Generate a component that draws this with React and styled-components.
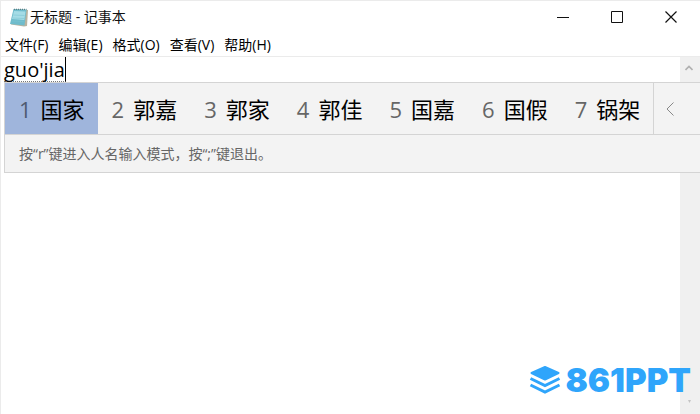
import { useState } from "react";
import styled, { createGlobalStyle } from "styled-components";

const GlobalStyle = createGlobalStyle`
    *{
        box-sizing: border-box;
    }
    body{
        margin: 0;
        background: #fff;
        color: #000;
        font-family: "Open Sans", "Noto Sans CJK SC", sans-serif;
    }
    button{
        font-family: inherit;
        background: none;
        border: 0;
        padding: 0;
        color: inherit;
    }
`;
const Window = styled.div`
    position: relative;
    display: flex;
    flex-direction: column;
    height: 100vh;
    overflow: hidden;
    border-top: 1px solid #ebebeb;
    border-left: 1px solid #ebebeb;
`;
const TitleBar = styled.header`
    display: flex;
    align-items: center;
    height: 32px;
    padding-left: 8px;
    h1{
        flex: 1;
        margin: 0;
        font-size: 14px;
        line-height: 20px;
        font-weight: normal;
        color: #111;
    }
`;
const WindowButton = styled.button`
    display: flex;
    align-items: center;
    justify-content: center;
    width: 54px;
    height: 32px;
`;
const WindowButtons = styled.div`
    display: flex;
    padding-right: 2px;
`;
const MenuBar = styled.nav`
    display: flex;
    gap: 10px;
    height: 23px;
    padding-left: 4px;
`;
const MenuButton = styled.button`
    font-size: 14px;
    line-height: 20px;
    white-space: nowrap;
`;
const Editor = styled.main`
    position: relative;
    flex: 1;
    display: flex;
    border-top: 1px solid #ebebeb;
`;
const TextBox = styled.textarea`
    flex: 1;
    border: 0;
    outline: 0;
    resize: none;
    padding: 0 3px;
    font: 20px/25px "Open Sans", "Noto Sans CJK SC", sans-serif;
`;
const ScrollBar = styled.div`
    display: flex;
    flex-direction: column;
    justify-content: space-between;
    width: 20px;
    background: #f0f0f0;
`;
const ScrollButton = styled.button`
    display: flex;
    align-items: center;
    justify-content: center;
    width: 18px;
    height: 22px;
`;
const Composition = styled.span`
    position: absolute;
    top: 0;
    left: 3px;
    height: 25px;
    font-size: 20px;
    line-height: 25px;
    border-bottom: 1px dotted #777;
    border-right: 1px solid #000;
`;
const ImePanel = styled.section`
    position: absolute;
    top: 25px;
    left: 3px;
    right: 0;
    background: #f3f3f3;
    border: 1px solid #d4d4d4;
    border-right: 0;
`;
const CandidateRow = styled.div`
    display: flex;
    height: 52px;
    border-bottom: 1px solid #d4d4d4;
`;
const Candidate = styled.button`
    display: flex;
    align-items: center;
    gap: 9px;
    padding: 0 13px 0 14px;
    font-size: 22px;
    line-height: 30px;
    white-space: nowrap;
    background: ${props => (props.$active ? '#9fb5dc' : 'transparent')};
    span{
        color: ${props => (props.$active ? '#4f5b70' : '#666')};
    }
`;
const PageButton = styled.button`
    flex: 1;
    display: flex;
    align-items: center;
    padding-left: 12px;
    border-left: 1px solid #d4d4d4;
`;
const Hint = styled.p`
    margin: 0;
    padding: 9px 14px 8px;
    font-size: 14px;
    line-height: 20px;
    color: #666;
`;
const Watermark = styled.div`
    position: absolute;
    right: 9px;
    bottom: 18px;
    display: flex;
    align-items: center;
    gap: 4px;
    color: #2fa5fb;
    font: 900 33px/32px Inter, sans-serif;
`;

const menus = ['文件(F)', '编辑(E)', '格式(O)', '查看(V)', '帮助(H)'];
const candidates = ['国家', '郭嘉', '郭家', '郭佳', '国嘉', '国假', '锅架'];

function NotepadIcon() {
    return (
        <svg width="21" height="20" viewBox="0 0 21 20" aria-hidden="true">
            <path d="M5 2 L19 3 L18 19 L15 19.5 L2 17.5 Z" fill="#b9b3a0" />
            <path d="M4.5 2 L17.5 2.5 L15.5 18.5 L1 17 Z" fill="#6fbccc" />
            <path d="M5 4 L16.5 4.5 L15.3 13 L3 12 Z" fill="#a5dce6" />
            <path d="M4 8 L15.5 8.5 M3.5 11 L15 11.5 M3 14 L14.5 14.5" stroke="#7cc4d2" strokeWidth=".6" />
            <path d="M5 2.4 H17.5" stroke="#5b7d83" strokeWidth="1.2" strokeDasharray="1 1" />
        </svg>
    );
}

function LogoIcon() {
    return (
        <svg width="32" height="30" viewBox="0 0 32 30" fill="none" aria-hidden="true">
            <path d="M16 2 L29.5 8 L16 14.5 L2.5 8 Z" fill="currentColor" stroke="currentColor" strokeWidth="2" strokeLinejoin="round" />
            <path d="M1.5 13.5 L16 20.5 L30.5 13.5 M1.5 20 L16 27 L30.5 20" stroke="currentColor" strokeWidth="3" />
        </svg>
    );
}

export default function App() {
    const [text, setText] = useState('');
    const [active, setActive] = useState(0);
    return (
        <Window>
            <GlobalStyle />
            <TitleBar>
                <NotepadIcon />
                <h1>无标题 - 记事本</h1>
                <WindowButtons>
                    <WindowButton aria-label="最小化">
                        <svg width="12" height="12" stroke="#111"><path d="M0 6.5 H12" /></svg>
                    </WindowButton>
                    <WindowButton aria-label="最大化">
                        <svg width="12" height="12" fill="none" stroke="#111"><path d="M.5 .5 H11.5 V11.5 H.5 Z" /></svg>
                    </WindowButton>
                    <WindowButton aria-label="关闭">
                        <svg width="12" height="12" stroke="#111" strokeWidth="1.2"><path d="M.5 .5 L11.5 11.5 M11.5 .5 L.5 11.5" /></svg>
                    </WindowButton>
                </WindowButtons>
            </TitleBar>
            <MenuBar>
                {menus.map(menu => (
                    <MenuButton key={menu}>{menu}</MenuButton>
                ))}
            </MenuBar>
            <Editor>
                <TextBox aria-label="文本" value={text} onChange={ev => setText(ev.target.value)} />
                <ScrollBar>
                    <ScrollButton aria-label="向上滚动">
                        <svg width="8" height="6" fill="none" stroke="#b0b0b0" strokeWidth="1.6"><path d="M.5 5 L4 1.5 L7.5 5" /></svg>
                    </ScrollButton>
                    <ScrollButton aria-label="向下滚动">
                        <svg width="8" height="6" fill="#c4c4c4"><path d="M3 0 H6 L4.5 3 Z" /></svg>
                    </ScrollButton>
                </ScrollBar>
                <Composition>guo'jia</Composition>
                <ImePanel>
                    <CandidateRow>
                        {candidates.map((word, index) => (
                            <Candidate key={word} $active={index === active} onClick={() => setActive(index)}>
                                <span>{index + 1}</span>
                                {word}
                            </Candidate>
                        ))}
                        <PageButton aria-label="上一页">
                            <svg width="8" height="14" fill="none" stroke="#888"><path d="M7.5 .5 L1 7 L7.5 13.5" /></svg>
                        </PageButton>
                    </CandidateRow>
                    <Hint>按“r”键进入人名输入模式，按“;”键退出。</Hint>
                </ImePanel>
            </Editor>
            <Watermark>
                <LogoIcon />
                861PPT
            </Watermark>
        </Window>
    );
}
